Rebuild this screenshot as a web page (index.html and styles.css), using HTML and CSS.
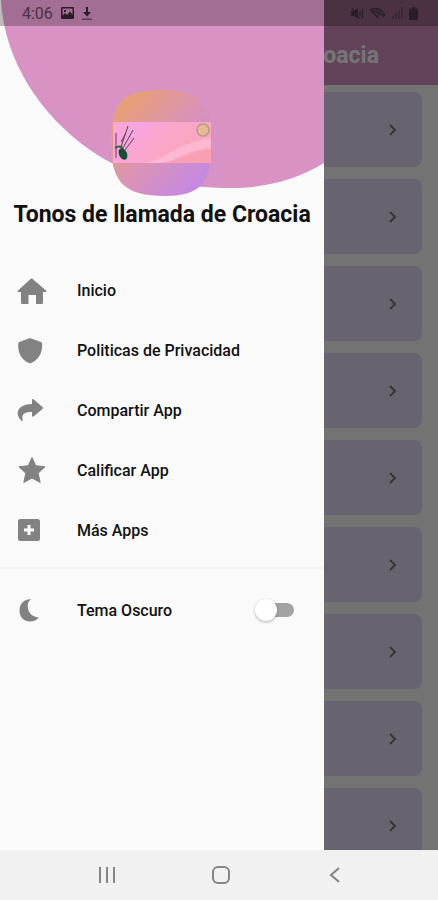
FILE: index.html
```
<!DOCTYPE html>
<html lang="es">
<head>
  <meta charset="UTF-8">
  <meta name="viewport" content="width=device-width, initial-scale=1.0">
  <title>Tonos de llamada de Croacia</title>
  <link rel="stylesheet" href="styles.css">
</head>
<body>
  <div class="screen">
    <main class="page">
      <header class="app-bar">
        <h1>Tonos de llamada de Croacia</h1>
      </header>
      <div class="tones">
        <button class="tone" aria-label="Tono 1"><svg viewBox="0 0 10 14"><path d="M2 2l5 5-5 5"/></svg></button>
        <button class="tone" aria-label="Tono 2"><svg viewBox="0 0 10 14"><path d="M2 2l5 5-5 5"/></svg></button>
        <button class="tone" aria-label="Tono 3"><svg viewBox="0 0 10 14"><path d="M2 2l5 5-5 5"/></svg></button>
        <button class="tone" aria-label="Tono 4"><svg viewBox="0 0 10 14"><path d="M2 2l5 5-5 5"/></svg></button>
        <button class="tone" aria-label="Tono 5"><svg viewBox="0 0 10 14"><path d="M2 2l5 5-5 5"/></svg></button>
        <button class="tone" aria-label="Tono 6"><svg viewBox="0 0 10 14"><path d="M2 2l5 5-5 5"/></svg></button>
        <button class="tone" aria-label="Tono 7"><svg viewBox="0 0 10 14"><path d="M2 2l5 5-5 5"/></svg></button>
        <button class="tone" aria-label="Tono 8"><svg viewBox="0 0 10 14"><path d="M2 2l5 5-5 5"/></svg></button>
        <button class="tone" aria-label="Tono 9"><svg viewBox="0 0 10 14"><path d="M2 2l5 5-5 5"/></svg></button>
      </div>
    </main>

    <div class="scrim"></div>

    <aside class="drawer">
      <div class="drawer-header">
        <svg class="drawer-shape" viewBox="0 0 324 189" preserveAspectRatio="none">
          <path d="M1 0C4 60 40 115 90 150C130 178 180 188 232 188C266 188 298 179 324 163V0Z" fill="#d893c4"/>
        </svg>
        <svg class="logo" viewBox="0 0 102 106">
          <defs>
            <linearGradient id="blob" x1="0.1" y1="0.1" x2="0.9" y2="0.9">
              <stop offset="0" stop-color="#e8a071"/>
              <stop offset="0.5" stop-color="#db93b4"/>
              <stop offset="1" stop-color="#c488e6"/>
            </linearGradient>
            <linearGradient id="banner" x1="0" y1="0" x2="1" y2="0.4">
              <stop offset="0" stop-color="#f8a6cc"/>
              <stop offset="0.25" stop-color="#f6a5e0"/>
              <stop offset="0.6" stop-color="#fba6c9"/>
              <stop offset="1" stop-color="#f9a6bb"/>
            </linearGradient>
          </defs>
          <path d="M50 0C88 0 101 12 101 53C101 94 88 106 54 106C14 106 0 93 0 53C0 12 12 0 50 0Z" fill="url(#blob)"/>
          <rect x="2" y="32" width="98" height="41" fill="url(#banner)"/>
          <path d="M33 73C57 69 62 54 100 48V58C76 59 66 72 48 73Z" fill="#ffc5dc" opacity="0.6"/>
          <path d="M54 73C72 70 78 61 100 60V73Z" fill="#f99cb0" opacity="0.7"/>
          <circle cx="92" cy="40" r="6" fill="#e8b994" stroke="#aaa087" stroke-width="1.500"/>
          <g stroke="#604252" stroke-width="1" fill="none">
            <path d="M5 43v25M10 57l7-21M12 58l10-18M14 60l9-12M10 52l5-9"/>
          </g>
          <path d="M4 58q6-4 8 2" stroke="#286747" stroke-width="2" fill="none"/>
          <ellipse cx="12" cy="64" rx="4" ry="6" transform="rotate(-25 12 64)" fill="#174d35"/>
        </svg>
        <h2>Tonos de llamada de Croacia</h2>
      </div>

      <nav class="menu">
        <a class="item" href="#inicio">
          <svg viewBox="0 0 30 30"><path d="M15 3.400L29.300 15.800Q30 17 28.500 17H26V27.500Q26 29 24.500 29H19V20H11.500V29H5.500Q4 29 4 27.500V17H1.500Q0 17 .7 15.800L13.800 3.800Q15 2.800 16.200 3.800Z"/></svg>
          <span>Inicio</span>
        </a>
        <a class="item" href="#privacidad">
          <svg viewBox="0 0 30 30"><path d="M12.500 3.200Q13 3 13.500 3.200L24 7Q25.200 7.500 25.200 9C25.500 18 21.500 25 14 28Q13 28.400 12 28C4.500 25 .8 18 1.200 9Q1.200 7.500 2.200 7Z"/></svg>
          <span>Politicas de Privacidad</span>
        </a>
        <a class="item" href="#compartir">
          <svg viewBox="0 0 30 30"><path d="M15 4.500Q15.500 3.500 16.500 4.300L25.500 12Q26.500 13 25.500 14L16.500 21.500Q15.500 22.200 15 21V17C7 17 4.500 19 5.700 25Q5.800 26.500 4.500 25.700C-3 19 .5 9 15 9Z"/></svg>
          <span>Compartir App</span>
        </a>
        <a class="item" href="#calificar">
          <svg viewBox="0 0 30 30"><path d="M15 2.500L18.700 10.700L28 11.800L21.200 18.200L23.200 27.500L15 23L6.800 27.500L8.800 18.200L2 11.800L11.300 10.700Z" stroke="#828282" stroke-linejoin="round"/></svg>
          <span>Calificar App</span>
        </a>
        <a class="item" href="#mas">
          <svg viewBox="0 0 30 30"><rect x="1" y="4" width="22" height="22" rx="2.500"/><path d="M12 10v10M7 15h10" stroke="#fff" stroke-width="3"/></svg>
          <span>Más Apps</span>
        </a>
      </nav>

      <label class="item theme">
        <svg viewBox="0 0 30 30"><path d="M14.500 4.300C8 6.500 9.500 22 22 22.500C16 29.500 2.500 27.500 2.500 15.500C2.500 7.500 8.500 3.500 14.500 4.300Z"/></svg>
        <span>Tema Oscuro</span>
        <input class="switch" type="checkbox" role="switch">
      </label>
    </aside>

    <div class="status-bar">
      <span class="time">4:06</span>
      <svg width="13" height="12" viewBox="0 0 13 12"><path fill-rule="evenodd" d="M1 0H12Q13 0 13 1V11Q13 12 12 12H1Q0 12 0 11V1Q0 0 1 0ZM1.500 1.500V8.500L4 6L6 8L9 4.500L11.500 7.500V1.500ZM3 3H5V5H3Z"/></svg>
      <svg width="10" height="13" viewBox="0 0 10 13"><path d="M4 0H6V5H9L5 9.500L1 5H4Z"/><path d="M0 11.500H10V13H0Z" opacity="0.6"/></svg>
      <div class="signals">
        <svg width="13" height="13" viewBox="0 0 13 13"><path d="M0 4H3L7 1V12L3 9H0Z"/><path d="M1 1L9 12M9 4v5M11.500 2v9" fill="none" stroke="#2b1d27" stroke-width="1.200"/></svg>
        <svg width="16" height="13" viewBox="0 0 16 13"><path d="M0 3Q7-1 13 5L8 11Z" opacity="0.4"/><path d="M0 3Q7-1 13 5M2.500 6Q7 3 10 7M0 3L8 11M10 8h5M13 6l2 2-2 2" fill="none" stroke="#2b1d27" stroke-width="1.200"/></svg>
        <svg width="11" height="12" viewBox="0 0 11 12" opacity="0.5"><path d="M0 9H2V12H0ZM3 6H5V12H3ZM6 3H8V12H6ZM9 0H11V12H9Z"/></svg>
        <svg width="9" height="13" viewBox="0 0 9 13"><path d="M3 0H6V1.500H8Q9 1.500 9 2.500V12Q9 13 8 13H1Q0 13 0 12V2.500Q0 1.500 1 1.500H3Z"/></svg>
      </div>
    </div>
  </div>

  <footer class="system-nav">
    <button aria-label="Recientes"><svg viewBox="0 0 20 20"><path d="M3 2v16M10 2v16M17 2v16"/></svg></button>
    <button aria-label="Pantalla de inicio"><svg viewBox="0 0 20 20"><rect x="2" y="2" width="16" height="16" rx="5"/></svg></button>
    <button aria-label="Atrás"><svg viewBox="0 0 20 20"><path d="M14 3L6 10l8 7"/></svg></button>
  </footer>
</body>
</html>
```
FILE: styles.css
```
* {
  box-sizing: border-box;
}
body {
  font-family: Roboto, sans-serif;
  display: flex;
  flex-direction: column;
  height: 100vh;
  margin: 0;
  background: #fafafa;
  color: #111;
}
h1, h2 {
  margin: 0;
  font-size: 23px;
  font-weight: 700;
  white-space: nowrap;
}
button {
  border: none;
  padding: 0;
  cursor: pointer;
}
.screen {
  position: relative;
  flex: 1;
  min-height: 0;
  overflow: hidden;
}

/* Tone list behind the drawer */
.app-bar {
  display: flex;
  justify-content: flex-end;
  align-items: center;
  height: 85px;
  padding: 26px 59px 0 0;
  background: #d893c4;
  color: #fff;
}
.tones {
  display: flex;
  flex-direction: column;
  gap: 12px;
  padding: 7px 16px;
}
.tone {
  display: flex;
  justify-content: flex-end;
  align-items: center;
  flex: none;
  height: 75px;
  padding-right: 24px;
  border-radius: 8px;
  background: #e2d9f1;
}
.tone svg {
  width: 10px;
  height: 14px;
  fill: none;
  stroke: #777;
  stroke-width: 2;
}
.scrim {
  position: absolute;
  inset: 0;
  background: rgba(0, 0, 0, 0.54);
}

/* Drawer */
.drawer {
  position: absolute;
  top: 0;
  bottom: 0;
  left: 0;
  width: 74%;
  background: #fafafa;
}
.drawer-header {
  position: relative;
  display: flex;
  flex-direction: column;
  align-items: center;
  gap: 4px;
  height: 260px;
  padding-top: 90px;
}
.drawer-shape {
  position: absolute;
  top: 0;
  left: 0;
  width: 100%;
  height: 189px;
}
.logo {
  position: relative;
  width: 102px;
  height: 106px;
}
.drawer-header h2 {
  line-height: 30px;
}
.menu {
  padding-bottom: 7px;
  border-bottom: 2px solid #f4f4f4;
}
.item {
  display: flex;
  align-items: center;
  gap: 30px;
  height: 60px;
  padding: 0 30px 0 17px;
  color: inherit;
  font-size: 16px;
  font-weight: 500;
  text-decoration: none;
}
.item svg {
  width: 30px;
  height: 30px;
  fill: #828282;
}
.theme {
  margin-top: 11px;
}
.switch {
  appearance: none;
  display: flex;
  align-items: center;
  width: 36px;
  height: 14px;
  margin: 0 0 0 auto;
  border-radius: 7px;
  background: #a3a3a3;
}
.switch::before {
  content: "";
  flex: none;
  width: 22px;
  height: 22px;
  margin-left: -3px;
  border-radius: 50%;
  background: #fff;
  box-shadow: 0 1px 3px rgba(0, 0, 0, 0.3);
}
.switch:checked {
  justify-content: flex-end;
  background: #d893c4;
}

/* System bars */
.status-bar {
  position: absolute;
  top: 0;
  left: 0;
  right: 0;
  display: flex;
  align-items: center;
  gap: 8px;
  height: 26px;
  padding: 0 20px 0 22px;
  background: rgba(0, 0, 0, 0.25);
  color: #4a3143;
  font-size: 16px;
}
.status-bar svg {
  fill: #2b1d27;
}
.signals {
  display: flex;
  align-items: center;
  gap: 6px;
  margin-left: auto;
}
.system-nav {
  display: grid;
  grid-template-columns: repeat(3, 1fr);
  height: 50px;
  padding: 0 46px 0 50px;
  background: #f1f1f1;
}
.system-nav button {
  background: none;
}
.system-nav svg {
  width: 20px;
  height: 20px;
  vertical-align: middle;
  fill: none;
  stroke: #858585;
  stroke-width: 2;
}
```
